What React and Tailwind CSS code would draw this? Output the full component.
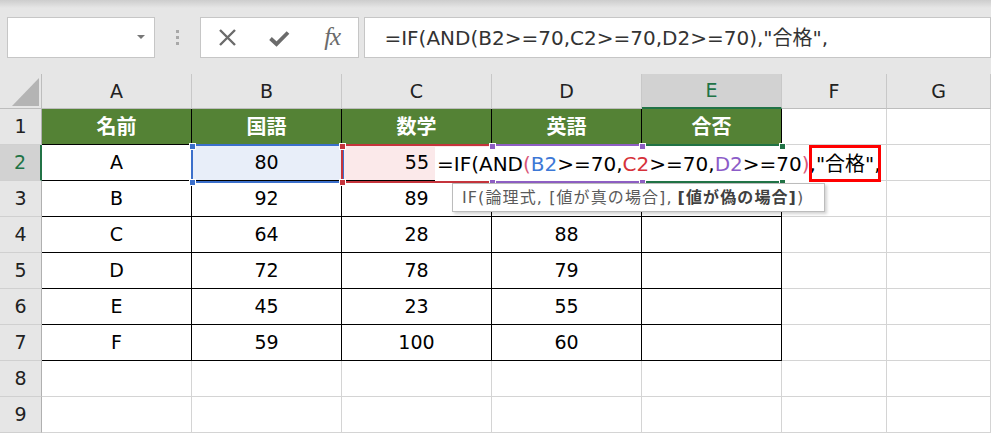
import React from 'react';

const colWidths = ['w-[42px]', 'w-[150px]', 'w-[150px]', 'w-[150px]', 'w-[150px]', 'w-[140px]', 'w-[105px]', 'w-[104px]'];
const colNames = ['A', 'B', 'C', 'D', 'E', 'F', 'G'];

// D2 and D3 sit under the edit text and the tooltip, so they stay blank here
const rows = [
  ['名前', '国語', '数学', '英語', '合否', '', ''],
  ['A', '80', '55', '', '', '', ''],
  ['B', '92', '89', '', '', '', ''],
  ['C', '64', '28', '88', '', '', ''],
  ['D', '72', '78', '79', '', '', ''],
  ['E', '45', '23', '55', '', '', ''],
  ['F', '59', '100', '60', '', '', ''],
  ['', '', '', '', '', '', ''],
  ['', '', '', '', '', '', ''],
];

const Handle = ({ x, y, color }) => (
  <div
    className={`absolute w-[7px] h-[7px] border border-white ${color}`}
    style={{ left: x - 3, top: y - 3 }}
  />
);

const cellClass = (r, c) => {
  const inTable = c < 5 && r < 7;
  let cls = 'h-full flex items-center justify-center border-r border-b ';
  cls += inTable ? 'border-black ' : 'border-[#d4d4d4] ';
  if (r === 0 && c < 5) cls += 'bg-[#548235] text-white font-bold text-[20px] ';
  else if (r === 1 && c === 1) cls += 'bg-[#e8eef9] ';
  else if (r === 1 && c === 2) cls += 'bg-[#fbe9ea] !justify-end pr-[62px] ';
  else cls += 'bg-white ';
  return cls;
};

const Toolbar = () => (
  <div className="relative h-[74px] bg-[#e6e6e6] flex items-start pt-[17px] pl-[7px]">
    <div className="absolute top-0 inset-x-0 h-[8px] bg-linear-to-b from-[#cdcdcd] to-[#e6e6e6]" />
    <div className="relative w-[151px] h-[41px] bg-white border border-[#c6c6c6] flex items-center justify-end pr-[9px]">
      <svg width="8" height="5" viewBox="0 0 8 5">
        <path d="M0 0 L8 0 L4 4 Z" fill="#777" />
      </svg>
    </div>
    <div className="w-[46px] h-[41px] flex flex-col items-center justify-center gap-[3px]">
      <div className="w-[3px] h-[3px] bg-[#a8a8a8]" />
      <div className="w-[3px] h-[3px] bg-[#a8a8a8]" />
      <div className="w-[3px] h-[3px] bg-[#a8a8a8]" />
    </div>
    <div className="w-[163px] h-[41px] bg-white border border-[#c6c6c6] grid grid-cols-3 items-center justify-items-center">
      <svg width="19" height="19" viewBox="0 0 19 19">
        <path d="M2 2 L17 17 M17 2 L2 17" stroke="#6b6b6b" strokeWidth="2.4" fill="none" />
      </svg>
      <svg width="21" height="18" viewBox="0 0 21 18">
        <path d="M1.5 9.5 L7.5 15 L19 3.5" stroke="#6b6b6b" strokeWidth="3.8" fill="none" />
      </svg>
      <span className="font-['Liberation_Serif',serif] italic text-[25px] text-[#6b6b6b] leading-none pb-[3px] tracking-[-1px]">fx</span>
    </div>
    <div className="ml-[5px] w-[640px] h-[41px] bg-white border border-[#c6c6c6] flex items-center pl-[19px] text-[20px] text-[#333] whitespace-nowrap">
      =IF(AND(B2&gt;=70,C2&gt;=70,D2&gt;=70),"合格",
    </div>
  </div>
);

const Sheet = () => (
  <div className="relative">
    <div className="flex h-[35px]">
      <div className="w-[42px] h-full bg-[#e6e6e6] border-r border-b border-[#bdbdbd] relative">
        <svg className="absolute left-0 top-0" width="42" height="35" viewBox="0 0 42 35">
          <path d="M39 4 L39 32 L12 32 Z" fill="#b4b4b4" />
        </svg>
      </div>
      {colNames.map((name, i) => (
        <div
          key={name}
          className={`${colWidths[i + 1]} h-full flex items-center justify-center text-[19px] border-r border-[#c8c8c8] ${
            name === 'E'
              ? 'bg-[#d2d2d2] text-[#217346] border-b-2 border-b-[#217346]'
              : 'bg-[#e6e6e6] text-[#222] border-b border-b-[#bdbdbd]'
          }`}
        >
          {name}
        </div>
      ))}
    </div>

    {rows.map((row, r) => (
      <div key={r} className="flex h-[36px]">
        <div
          className={`w-[42px] h-full flex items-center justify-center text-[19px] border-b border-[#d0d0d0] ${
            r === 1
              ? 'bg-[#d2d2d2] text-[#217346] border-r-2 border-r-[#217346]'
              : 'bg-[#e6e6e6] text-[#222] border-r border-r-[#b0b0b0]'
          }`}
        >
          {r + 1}
        </div>
        {row.map((val, c) => (
          <div key={c} className={`${colWidths[c + 1]} ${cellClass(r, c)} text-[19px] text-black`}>
            {val}
          </div>
        ))}
      </div>
    ))}

    {/* reference highlight boxes on row 2 */}
    <div className="absolute left-[641px] top-[70px] w-[142px] h-[39px] border-2 border-[#217346]" />
    <div className="absolute left-[191px] top-[70px] w-[153px] h-[39px] border-2 border-[#3b6fcb]" />
    <div className="absolute left-[341px] top-[70px] w-[153px] h-[39px] border-2 border-[#c5343c]" />
    <div className="absolute left-[491px] top-[70px] w-[153px] h-[39px] border-2 border-[#8e5ec3]" />

    {/* in-cell edit text */}
    <div className="absolute left-[435px] top-[73px] w-[446px] h-[34px] bg-white flex items-center pl-[2px] text-[20px] text-black whitespace-nowrap">
      <span>=IF(AND</span>
      <span className="text-[#d9577a]">(</span>
      <span className="text-[#3d78d6]">B2</span>
      <span>&gt;=70,</span>
      <span className="text-[#d6323a]">C2</span>
      <span>&gt;=70,</span>
      <span className="text-[#8c5cc8]">D2</span>
      <span>&gt;=70</span>
      <span className="text-[#d9577a]">)</span>
      <span>,"合格",</span>
    </div>

    <Handle x={782} y={72} color="bg-[#217346]" />
    <Handle x={782} y={108} color="bg-[#217346]" />
    <Handle x={192} y={72} color="bg-[#3b6fcb]" />
    <Handle x={192} y={108} color="bg-[#3b6fcb]" />
    <Handle x={342} y={72} color="bg-[#c5343c]" />
    <Handle x={342} y={108} color="bg-[#c5343c]" />
    <Handle x={492} y={72} color="bg-[#8e5ec3]" />
    <Handle x={492} y={108} color="bg-[#8e5ec3]" />
    <Handle x={642} y={72} color="bg-[#8e5ec3]" />
    <Handle x={642} y={108} color="bg-[#8e5ec3]" />

    {/* annotation box */}
    <div className="absolute left-[809px] top-[71px] w-[72px] h-[37px] border-[3px] border-[#ff0000]" />

    {/* function tooltip */}
    <div className="absolute left-[452px] top-[109px] w-[373px] h-[29px] bg-white border border-[#bcbcbc] shadow-[2px_2px_3px_rgba(0,0,0,0.18)] flex items-center pl-[9px] text-[16px] text-[#5a5a5a] whitespace-nowrap tracking-[1.1px]">
      IF(論理式, [値が真の場合], <span className="font-bold text-[#404040] ml-[5px]">[値が偽の場合]</span>)
    </div>
  </div>
);

export default function App() {
  return (
    <div className="w-[991px] h-[434px] overflow-hidden bg-white font-['DejaVu_Sans','Noto_Sans_CJK_JP',sans-serif]">
      <Toolbar />
      <Sheet />
    </div>
  );
}
